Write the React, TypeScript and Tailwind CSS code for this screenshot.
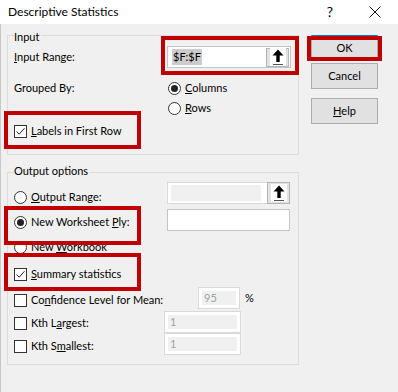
import React from 'react';

const font = { fontFamily: 'Lato, "Noto Sans", sans-serif' };

const Radio = ({ on }: { on?: boolean }) => (
  <span className="w-[13px] h-[13px] rounded-full border border-[#333] bg-white flex items-center justify-center shrink-0">
    {on && <span className="w-[7px] h-[7px] rounded-full bg-[#222]" />}
  </span>
);

const Check = ({ on }: { on?: boolean }) => (
  <span className="w-[13px] h-[13px] border border-[#333] bg-white flex items-center justify-center shrink-0">
    {on && (
      <svg width="11" height="11" viewBox="0 0 11 11">
        <path d="M1.5 5.5 L4.2 8.2 L9.5 2.2" fill="none" stroke="#222" strokeWidth="1" />
      </svg>
    )}
  </span>
);

const UpArrow = () => (
  <svg width="14" height="18" viewBox="0 0 14 18">
    <path d="M7 1.5 L1.5 7.5 H5.3 V14 H8.7 V7.5 H12.5 Z" fill="#000" />
    <rect x="2" y="16" width="10" height="1" fill="#555" />
  </svg>
);

const RefButton = () => (
  <div className="w-[23px] h-full bg-[#e1e1e1] border border-[#b5b5b5] flex items-center justify-center">
    <div className="bg-white w-[16px] h-[18px] flex items-center justify-center">
      <UpArrow />
    </div>
  </div>
);

const Disabled = ({ value, w }: { value: string; w: string }) => (
  <div className={`${w} h-[22px] bg-white border border-[#d9d9d9] p-[3px]`}>
    <div className="w-full h-full bg-[#f0f0f0] pl-[2px] text-[#a0a0a0] leading-[14px]">{value}</div>
  </div>
);

const Btn = ({ children, def }: { children: React.ReactNode; def?: boolean }) => (
  <div
    className={`w-[67px] h-[26px] flex items-center justify-center bg-[#e1e1e1] border border-[#adadad] ${
      def ? 'border-t-[#0078d7]' : ''
    }`}
  >
    {children}
  </div>
);

const RedBox = ({ cls }: { cls: string }) => (
  <div className={`absolute border-[4px] border-[#c00000] pointer-events-none ${cls}`} />
);

export default function App() {
  return (
    <div className="relative w-[398px] h-[392px] bg-[#f0f0f0] text-[11px] text-black overflow-hidden" style={font}>
      {/* title bar */}
      <div className="h-[24px] bg-white flex items-center">
        <span className="ml-[8px] text-[12px] leading-[18px]">Descriptive Statistics</span>
        <span className="ml-auto mr-[36px] text-[14px] leading-[18px]">?</span>
        <svg width="12" height="12" viewBox="0 0 12 12" className="mr-[17px]">
          <path d="M0.5 0.5 L11.5 11.5 M11.5 0.5 L0.5 11.5" stroke="#111" strokeWidth="1" />
        </svg>
      </div>

      <div className="flex pl-[7px] pt-[11px] border-l border-[#c8c8c8] h-[368px]">
        {/* left column */}
        <div className="w-[292px] -ml-[1px]">
          {/* Input group */}
          <div className="h-[120px] border border-[#dcdcdc] flex flex-col pl-[6px]">
            <span className="-mt-[7px] h-[16px] leading-[16px] w-fit bg-[#f0f0f0] pr-[2px]">Input</span>
            <div className="mt-[1px] h-[22px] flex items-center">
              <span className="w-[153px]">
                <u>I</u>nput Range:
              </span>
              <div className="w-[124px] h-[22px] bg-white border border-[#c4c4c4] flex items-center p-[1px] pl-[4px]">
                <span className="bg-[#cccccc] leading-[16px] px-[1px]">$F:$F</span>
                <div className="ml-auto h-[19px]">
                  <RefButton />
                </div>
              </div>
            </div>
            <div className="mt-[10px] h-[20px] flex items-center">
              <span className="w-[154px]">Grouped By:</span>
              <Radio on />
              <span className="ml-[4px]">
                <u>C</u>olumns
              </span>
            </div>
            <div className="h-[20px] flex items-center pl-[154px]">
              <Radio />
              <span className="ml-[4px]">
                <u>R</u>ows
              </span>
            </div>
            <div className="mt-[3px] h-[20px] flex items-center">
              <Check on />
              <span className="ml-[4px]">
                <u>L</u>abels in First Row
              </span>
            </div>
          </div>

          {/* Output group */}
          <div className="mt-[17px] h-[193px] border border-[#dcdcdc] flex flex-col pl-[6px]">
            <span className="-mt-[10px] h-[16px] leading-[16px] w-fit bg-[#f0f0f0] pr-[2px]">Output options</span>

            <div className="h-[28px] flex items-start">
              <div className="mt-[10px] h-[16px] w-[153px] flex items-center">
                <Radio />
                <span className="ml-[4px]">
                  <u>O</u>utput Range:
                </span>
              </div>
              <div className="mt-[3px] w-[123px] h-[22px] bg-white border border-[#d9d9d9] flex pl-[3px] items-center">
                <div className="w-[90px] h-[16px] bg-[#f0f0f0]" />
                <div className="ml-auto h-[22px] -mr-[1px]">
                  <RefButton />
                </div>
              </div>
            </div>

            <div className="h-[26px] flex items-start">
              <div className="mt-[7px] h-[16px] w-[153px] flex items-center">
                <Radio on />
                <span className="ml-[4px]">
                  New Worksheet <u>P</u>ly:
                </span>
              </div>
              <div className="mt-[2px] w-[123px] h-[22px] bg-white border border-[#c4c4c4]" />
            </div>

            <div className="h-[25px] flex items-start">
              <div className="mt-[6px] h-[16px] flex items-center">
                <Radio />
                <span className="ml-[4px]">
                  New <u>W</u>orkbook
                </span>
              </div>
            </div>

            <div className="h-[27px] flex items-start">
              <div className="mt-[8px] h-[16px] flex items-center">
                <Check on />
                <span className="ml-[4px]">
                  <u>S</u>ummary statistics
                </span>
              </div>
            </div>

            <div className="h-[25px] flex items-start">
              <div className="mt-[7px] h-[16px] w-[184px] flex items-center">
                <Check />
                <span className="ml-[4px]">
                  Co<u>n</u>fidence Level for Mean:
                </span>
              </div>
              <div className="mt-[2px]">
                <Disabled value="95" w="w-[42px]" />
              </div>
              <span className="mt-[5px] ml-[5px] leading-[16px]">%</span>
            </div>

            <div className="h-[23px] flex items-start">
              <div className="mt-[5px] h-[16px] w-[150px] flex items-center">
                <Check />
                <span className="ml-[4px]">
                  Kth L<u>a</u>rgest:
                </span>
              </div>
              <div className="mt-[1px]">
                <Disabled value="1" w="w-[77px]" />
              </div>
            </div>

            <div className="h-[24px] flex items-start">
              <div className="mt-[5px] h-[16px] w-[150px] flex items-center">
                <Check />
                <span className="ml-[4px]">
                  Kth S<u>m</u>allest:
                </span>
              </div>
              <Disabled value="1" w="w-[77px]" />
            </div>
          </div>
        </div>

        {/* right column */}
        <div className="ml-[12px] flex flex-col">
          <Btn def>OK</Btn>
          <div className="mt-[2px]">
            <Btn>Cancel</Btn>
          </div>
          <div className="mt-[9px]">
            <Btn>
              <span>
                <u>H</u>elp
              </span>
            </Btn>
          </div>
        </div>
      </div>

      {/* annotation boxes */}
      <RedBox cls="left-[161px] top-[36px] w-[138px] h-[39px]" />
      <RedBox cls="left-[307px] top-[36px] w-[75px] h-[25px]" />
      <RedBox cls="left-[4px] top-[111px] w-[137px] h-[38px]" />
      <RedBox cls="left-[4px] top-[206px] w-[137px] h-[39px]" />
      <RedBox cls="left-[4px] top-[253px] w-[137px] h-[38px]" />
    </div>
  );
}
